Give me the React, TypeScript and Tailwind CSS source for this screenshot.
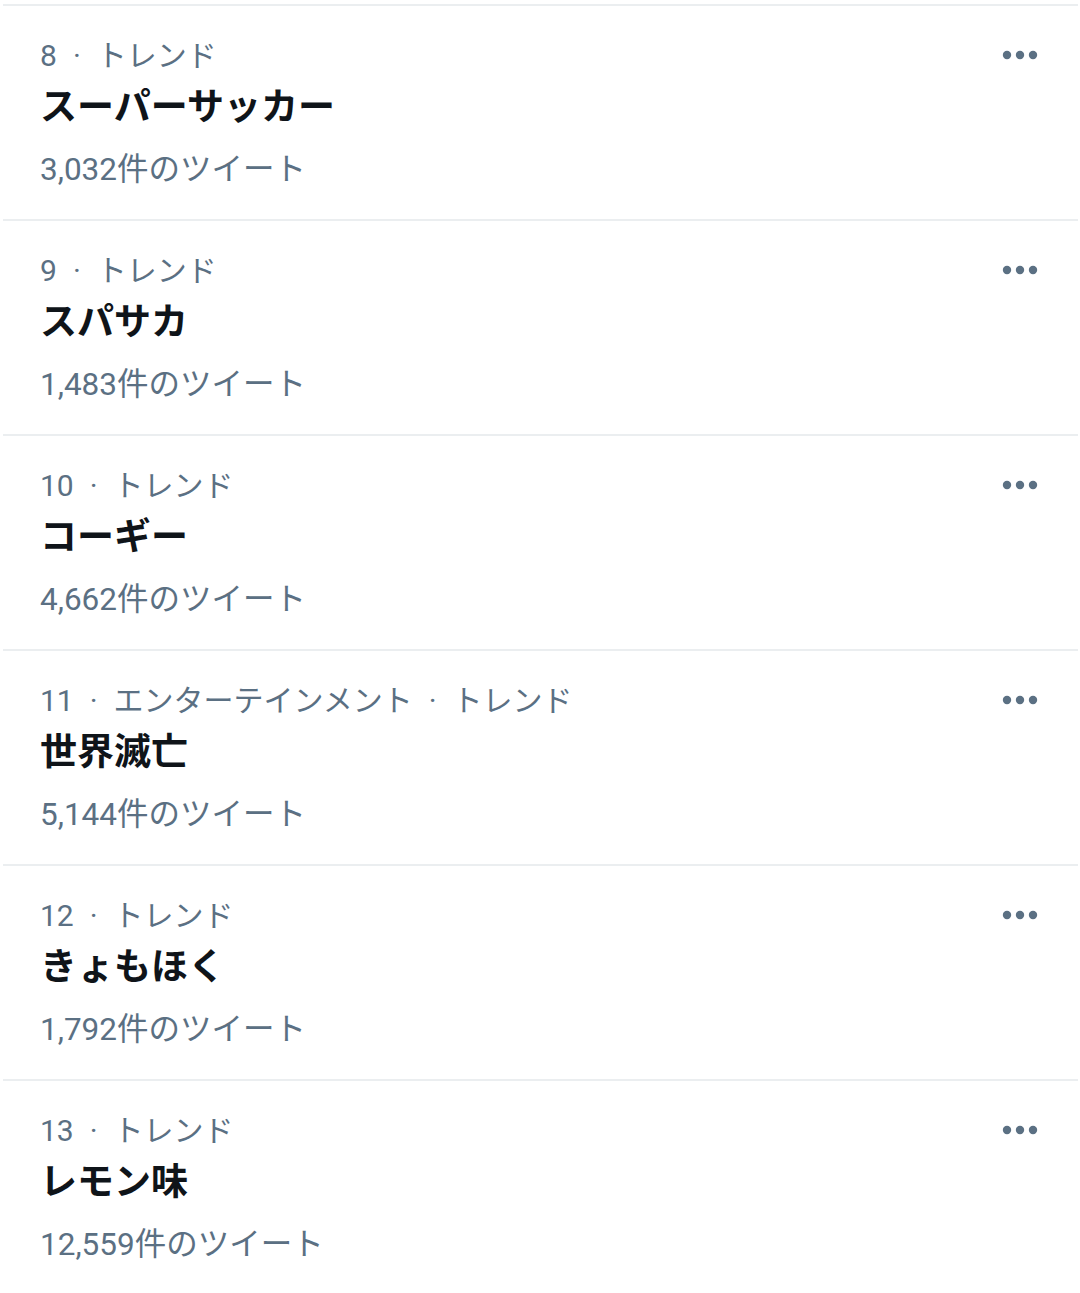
import React from 'react';

type Trend = { rank: number; category: string[]; title: string; count: string };

const trends: Trend[] = [
    { rank: 8, category: ['トレンド'], title: 'スーパーサッカー', count: '3,032' },
    { rank: 9, category: ['トレンド'], title: 'スパサカ', count: '1,483' },
    { rank: 10, category: ['トレンド'], title: 'コーギー', count: '4,662' },
    { rank: 11, category: ['エンターテインメント', 'トレンド'], title: '世界滅亡', count: '5,144' },
    { rank: 12, category: ['トレンド'], title: 'きょもほく', count: '1,792' },
    { rank: 13, category: ['トレンド'], title: 'レモン味', count: '12,559' },
];

const MoreIcon: React.FC = () => (
    <svg width="36" height="10" viewBox="0 0 36 10" className="fill-[#5b7083]">
        <circle cx="5" cy="5" r="4.2" />
        <circle cx="18" cy="5" r="4.2" />
        <circle cx="31" cy="5" r="4.2" />
    </svg>
);

const Dot: React.FC = () => <span className="mx-[16px]">·</span>;

const TrendRow: React.FC<{ trend: Trend }> = ({ trend }) => (
    <div className="flex justify-between border-b-2 border-[#ebeef0] pl-[37px] pr-[40px] pt-[30px] pb-[19px]">
        <div className="flex flex-col">
            <div className="text-[30px] leading-[40px] text-[#5b7083] whitespace-nowrap">
                {trend.rank}
                {trend.category.map(c => (
                    <React.Fragment key={c}>
                        <Dot />
                        {c}
                    </React.Fragment>
                ))}
            </div>
            <div className="text-[37px] leading-[62px] pt-[1px] font-bold text-[#0f1419]">{trend.title}</div>
            <div className="text-[31.5px] leading-[60px] pt-[1px] text-[#5b7083]">{trend.count}件のツイート</div>
        </div>
        <div className="h-[40px] flex items-center -mt-[1px]">
            <MoreIcon />
        </div>
    </div>
);

export default function App() {
    return (
        <div
            className="w-[1080px] h-[1293px] bg-white overflow-hidden pt-[4px]"
            style={{ fontFamily: 'Roboto, "Noto Sans CJK JP", sans-serif' }}
        >
            <div className="ml-[3px] mr-[2px] border-t-2 border-[#ebeef0]">
                {trends.map(t => (
                    <TrendRow key={t.rank} trend={t} />
                ))}
            </div>
        </div>
    );
}
